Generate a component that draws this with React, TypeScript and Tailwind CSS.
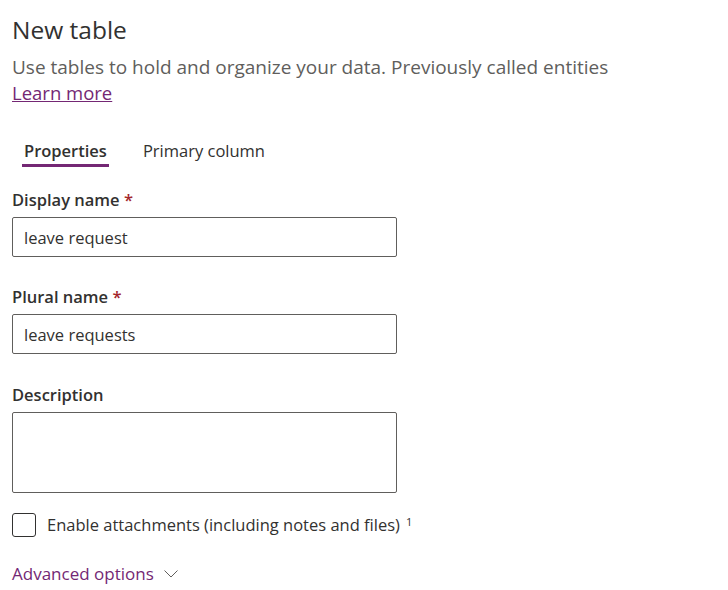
import React, { useState } from 'react';

export default function App() {
  const [tab, setTab] = useState('properties');
  const [displayName, setDisplayName] = useState('leave request');
  const [pluralName, setPluralName] = useState('leave requests');
  const [description, setDescription] = useState('');
  const [attachments, setAttachments] = useState(false);

  return (
    <div
      className="w-[728px] h-[590px] bg-white pl-3 pt-[14px] text-[#323130]"
      style={{ fontFamily: '"Open Sans", "Noto Sans", sans-serif' }}
    >
      <h1 className="text-[24.5px] leading-[32px] font-normal">New table</h1>
      <p className="mt-[8px] text-[19px] leading-[26px] text-[#605e5c]">
        Use tables to hold and organize your data. Previously called entities
      </p>
      <a href="#" className="text-[18.5px] leading-[26px] text-[#742774] underline">
        Learn more
      </a>

      {/* Tabs */}
      <div className="mt-[33px] flex gap-[32px] pl-[10px]">
        <button
          className={`px-[2px] pb-[1px] text-[16.5px] leading-[24px] border-b-[3px] ${tab === 'properties' ? 'font-semibold border-[#742774]' : 'border-transparent'}`}
          onClick={() => setTab('properties')}
        >
          Properties
        </button>
        <button
          className={`px-[2px] pb-[1px] text-[16.5px] leading-[24px] border-b-[3px] ${tab === 'primary' ? 'font-semibold border-[#742774]' : 'border-transparent'}`}
          onClick={() => setTab('primary')}
        >
          Primary column
        </button>
      </div>

      {/* Form */}
      <div className="mt-[21px] w-[385px]">
        <label className="block text-[16.5px] leading-[24px] font-semibold">
          Display name <span className="text-[#a4262c]">*</span>
        </label>
        <input
          value={displayName}
          onChange={e => setDisplayName(e.target.value)}
          className="mt-[5px] w-full h-[40px] border border-[#605e5c] rounded-[2px] px-[11px] text-[16.5px] outline-none"
        />

        <label className="mt-[28px] block text-[16.5px] leading-[24px] font-semibold">
          Plural name <span className="text-[#a4262c]">*</span>
        </label>
        <input
          value={pluralName}
          onChange={e => setPluralName(e.target.value)}
          className="mt-[5px] w-full h-[40px] border border-[#605e5c] rounded-[2px] px-[11px] text-[16.5px] outline-none"
        />

        <label className="mt-[29px] block text-[16.5px] leading-[24px] font-semibold">Description</label>
        <textarea
          value={description}
          onChange={e => setDescription(e.target.value)}
          className="mt-[5px] block w-full h-[81px] border border-[#605e5c] rounded-[2px] px-[11px] py-[6px] text-[16.5px] outline-none resize-none"
        />
      </div>

      <label className="mt-[20px] flex items-center gap-[11px] cursor-pointer">
        <input
          type="checkbox"
          checked={attachments}
          onChange={e => setAttachments(e.target.checked)}
          className="appearance-none w-[24px] h-[24px] border border-[#323130] rounded-[3px]"
        />
        <span className="text-[16.5px] leading-[24px]">
          Enable attachments (including notes and files)
          <sup className="ml-[6px] text-[11px]">1</sup>
        </span>
      </label>

      <button className="mt-[25px] flex items-center gap-[10px] text-[17px] leading-[24px] text-[#742774]">
        Advanced options
        <svg width="14" height="8" viewBox="0 0 14 8" fill="none">
          <path d="M0.5 0.5L7 7L13.5 0.5" stroke="#605e5c" strokeWidth="1" />
        </svg>
      </button>
    </div>
  );
}
